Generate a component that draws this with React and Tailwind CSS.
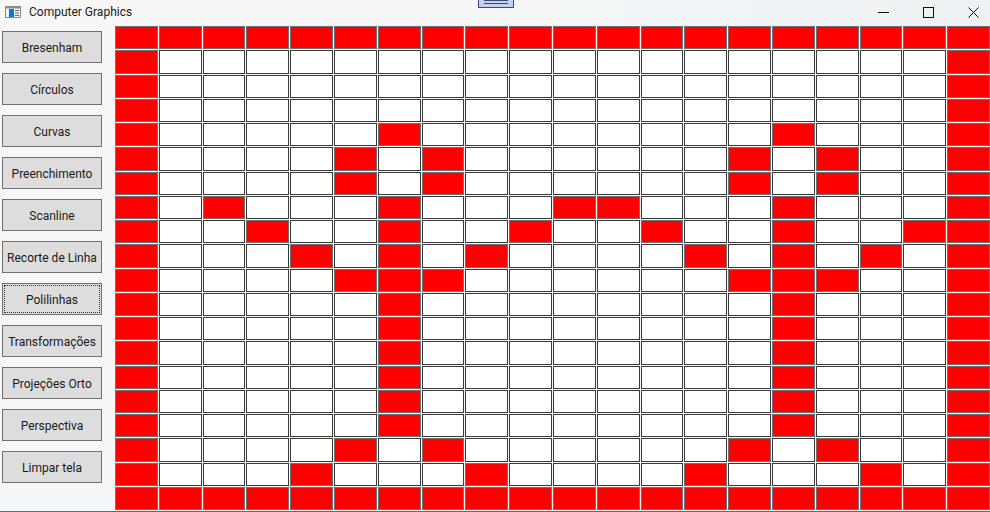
const BUTTONS = ['Bresenham', 'Círculos', 'Curvas', 'Preenchimento', 'Scanline', 'Recorte de Linha', 'Polilinhas', 'Transformações', 'Projeções Orto', 'Perspectiva', 'Limpar tela'];

// células pintadas de vermelho por linha (a borda é sempre vermelha)
const RED = {
  4: [6, 15],
  5: [5, 7, 14, 16],
  6: [5, 7, 14, 16],
  7: [2, 6, 10, 11, 15],
  8: [3, 6, 9, 12, 15, 18],
  9: [4, 6, 8, 13, 15, 17],
  10: [5, 6, 7, 14, 15, 16],
  11: [6, 15],
  12: [6, 15],
  13: [6, 15],
  14: [6, 15],
  15: [6, 15],
  16: [6, 15],
  17: [5, 7, 14, 16],
  18: [4, 8, 13, 17],
};

const isRed = (r, c) => r === 0 || r === 19 || c === 0 || c === 19 || (RED[r] || []).includes(c);

function AppIcon() {
  return (
    <svg width="16" height="12" viewBox="0 0 16 12" className="shrink-0">
      <rect x="0.5" y="0.5" width="15" height="11" fill="#f4f4f4" stroke="#8a8a8a" />
      <rect x="1" y="1" width="14" height="1.5" fill="#8f8f8f" />
      <rect x="4" y="3" width="5" height="8" fill="#0a78d7" />
      <path d="M10 4.5h4M10 7h4M10 9.5h4" stroke="#666" />
    </svg>
  );
}

export default function App() {
  return (
    <div className="relative flex flex-col h-[512px] w-[990px] overflow-hidden bg-[#f7f7f7] font-['Roboto','Noto_Sans',sans-serif] text-[#1a1a1a]">
      {/* barra de título */}
      <div className="flex items-center h-[26px] shrink-0 bg-gradient-to-r from-[#f7f7f7] via-[#f7f7f7] to-[#eef0f3]">
        <div className="flex items-center gap-[8px] pl-[5px] pb-[2px]">
          <AppIcon />
          <span className="text-[12px] leading-none">Computer Graphics</span>
        </div>
        <div className="ml-auto flex items-center gap-[34px] pr-[11px] pb-[2px]">
          <svg width="11" height="11" viewBox="0 0 11 11"><path d="M0 5.5h11" stroke="#111" /></svg>
          <svg width="11" height="11" viewBox="0 0 11 11"><rect x="0.5" y="0.5" width="10" height="10" fill="none" stroke="#111" /></svg>
          <svg width="11" height="11" viewBox="0 0 11 11"><path d="M0.5 0.5l10 10M10.5 0.5l-10 10" stroke="#111" /></svg>
        </div>
      </div>

      {/* miniatura sobreposta */}
      <div className="absolute left-[478px] top-0 w-[36px] h-[8px] bg-[#c5d0ea] border-x border-b border-[#3b4a80] flex flex-col gap-[2px] px-[5px]">
        <div className="h-px bg-[#3b4a80]" />
        <div className="h-px bg-[#3b4a80]" />
      </div>

      <div className="flex flex-1 min-h-0">
        <div className="flex flex-col w-[115px] shrink-0 gap-[10px] pl-[2px] pt-[5px]">
          {BUTTONS.map((b) => (
            <button key={b} className={`w-[100px] h-[32px] shrink-0 flex items-center justify-center pt-[1px] bg-[#dddddd] border border-[#707070] text-[12px] ${b === 'Polilinhas' ? 'outline-1 outline-dotted outline-[#333] -outline-offset-3' : ''}`}>
              {b}
            </button>
          ))}
        </div>

        <div className="flex-1 grid grid-cols-[repeat(20,1fr)] grid-rows-[repeat(20,1fr)] gap-px pb-[1px]">
          {Array.from({ length: 20 }).map((_, r) =>
            Array.from({ length: 20 }).map((_, c) => (
              <div key={`${r}-${c}`} className={`border ${isRed(r, c) ? 'bg-[#ff0000] border-[#707070]' : 'bg-white border-[#3a3a3a]'}`} />
            ))
          )}
        </div>
      </div>
      <div className="h-px shrink-0 bg-[#1f7fc4]" />
    </div>
  );
}
